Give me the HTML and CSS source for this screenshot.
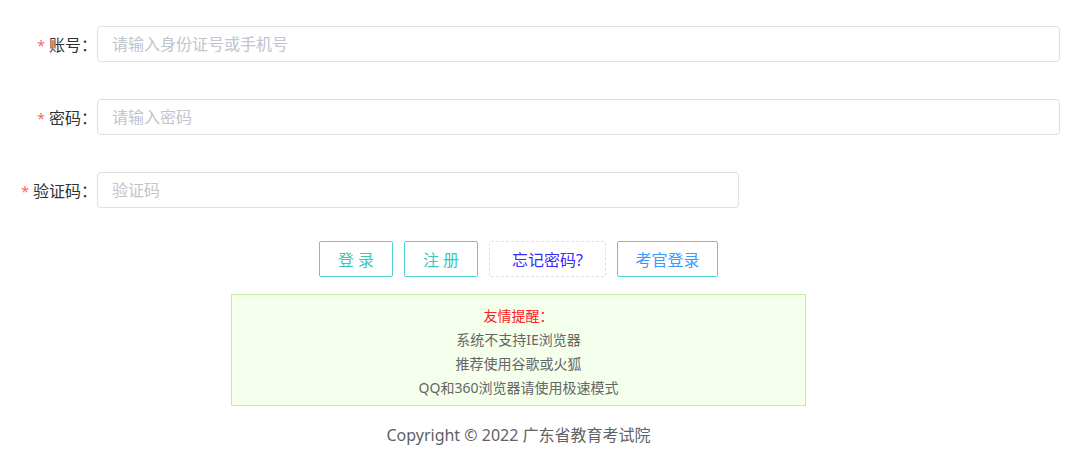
FILE: index.html
```html
<!DOCTYPE html>
<html lang="zh-CN">
<head>
    <meta charset="UTF-8">
    <meta name="viewport" content="width=device-width, initial-scale=1.0">
    <title>登录</title>
    <link rel="stylesheet" href="styles.css">
</head>
<body>

    <form class="login-form">
        <div class="form-item">
            <label class="form-label"><span class="required">*</span>账号：</label>
            <input type="text" class="input-field" placeholder="请输入身份证号或手机号">
        </div>
        <div class="form-item">
            <label class="form-label"><span class="required">*</span>密码：</label>
            <input type="password" class="input-field" placeholder="请输入密码">
        </div>
        <div class="form-item">
            <label class="form-label"><span class="required">*</span>验证码：</label>
            <input type="text" class="input-field input-code" placeholder="验证码">
        </div>
    </form>

    <div class="bottom">
        <div class="btn-row">
            <button type="button" class="btn btn-login">登 录</button>
            <button type="button" class="btn btn-login">注 册</button>
            <button type="button" class="btn btn-forgot">忘记密码?</button>
            <button type="button" class="btn btn-examiner">考官登录</button>
        </div>
        <div class="notice">
            <p class="notice-title">友情提醒：</p>
            <p>系统不支持IE浏览器</p>
            <p>推荐使用谷歌或火狐</p>
            <p>QQ和360浏览器请使用极速模式</p>
        </div>
        <div class="copyright">Copyright © 2022 广东省教育考试院</div>
    </div>

</body>
</html>
```

FILE: styles.css
```css
body {
    font-family: "Noto Sans", "Noto Sans CJK SC", sans-serif;
    background-color: #ffffff;
    margin: 0;
    color: #333;
}
.login-form {
    padding: 26px 20px 0 0;
}
.form-item {
    display: flex;
    align-items: center;
    height: 36px;
    margin-bottom: 37px;
}
.form-label {
    width: 97px;
    flex-shrink: 0;
    text-align: right;
    font-size: 16px;
    color: #303133;
}
.required {
    color: #f56c6c;
    margin-right: 4px;
    font-size: 14px;
}
.input-field {
    flex: 1;
    height: 36px;
    box-sizing: border-box;
    border: 1px solid #dcdfe6;
    border-radius: 4px;
    padding: 0 14px;
    font-size: 16px;
    font-family: inherit;
    color: #606266;
    outline: none;
}
.input-field::placeholder {
    color: #c0c4cc;
}
.input-code {
    flex: none;
    width: 642px;
}
.bottom {
    width: 1037px;
    display: flex;
    flex-direction: column;
    align-items: center;
    margin-top: -4px;
}
.btn-row {
    display: flex;
    gap: 11px;
}
.btn {
    height: 36px;
    box-sizing: border-box;
    background: #fff;
    border: 1px solid #4fd1d9;
    border-radius: 2px;
    font-size: 16px;
    font-family: inherit;
    padding: 0;
    cursor: pointer;
}
.btn-login {
    width: 74px;
    color: #3cc6c0;
}
.btn-forgot {
    width: 117px;
    border: 1px dashed #e0e0e0;
    color: #3a2aff;
}
.btn-examiner {
    width: 101px;
    color: #3a9aff;
}
.notice {
    width: 575px;
    box-sizing: border-box;
    margin-top: 17px;
    padding: 9px 0 5px;
    background-color: #f4ffec;
    border: 1px solid #c4eaa8;
    text-align: center;
    font-size: 14px;
    color: #666;
}
.notice p {
    margin: 0;
    line-height: 24px;
}
.notice .notice-title {
    color: #ff2020;
}
.copyright {
    margin-top: 17px;
    font-size: 16px;
    line-height: 24px;
    color: #606266;
}
```
